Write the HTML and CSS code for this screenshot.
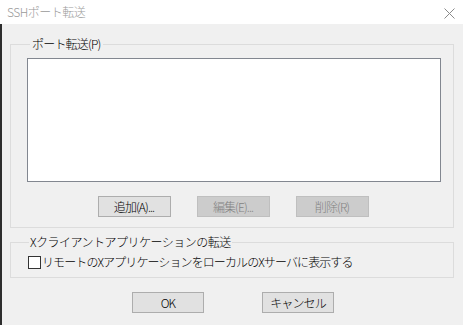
FILE: index.html
```html
<!DOCTYPE html>
<html>
<head>
    <title>SSHポート転送</title>
    <link rel="stylesheet" href="styles.css">
</head>
<body>
    <div class="titlebar">
        <span class="title">SSHポート転送</span>
        <svg class="close" width="11" height="11" viewBox="0 0 11 11">
            <path d="M0.5 0.5 L10.5 10.5 M10.5 0.5 L0.5 10.5" stroke="#8a8a8a" stroke-width="1" fill="none"/>
        </svg>
    </div>

    <div class="dialog">
        <fieldset class="group">
            <legend>ポート転送(P)</legend>
            <div class="listbox"></div>
            <div class="btn-row">
                <button class="btn">追加(A)...</button>
                <button class="btn" disabled>編集(E)...</button>
                <button class="btn" disabled>削除(R)</button>
            </div>
        </fieldset>

        <fieldset class="group group-x">
            <legend>Xクライアントアプリケーションの転送</legend>
            <label class="check">
                <span class="box"></span>
                <span>リモートのXアプリケーションをローカルのXサーバに表示する</span>
            </label>
        </fieldset>

        <div class="footer">
            <button class="btn btn-wide">OK</button>
            <button class="btn btn-wide">キャンセル</button>
        </div>
    </div>
</body>
</html>
```

FILE: styles.css
```css
html, body { margin: 0; height: 100%; }
body { width: 463px; height: 325px; background: #f0f0f0; font-family: "Noto Sans CJK JP", "Noto Sans", sans-serif; font-size: 12px; font-weight: 300; color: #000; display: flex; flex-direction: column; overflow: hidden; }

.titlebar { height: 24px; background: #fff; display: flex; align-items: center; justify-content: space-between; padding: 0 8px 0 7px; flex-shrink: 0; }
.title { color: #9a9a9a; font-size: 12px; line-height: 16px; letter-spacing: -0.5px; }
.close { margin-top: 2px; }

.dialog { flex: 1; border-left: 2px solid #2e2e2e; padding: 12px 9px 0 8px; display: flex; flex-direction: column; }

.group { margin: 0; border: 1px solid #dcdcdc; padding: 6px 12px 10px 16px; min-width: 0; }
.group legend { margin-left: 3px; padding: 0 2px; line-height: 16px; letter-spacing: -0.8px; }
.group-x { margin-top: 6px; padding: 4px 12px 7px 16px; }
.group-x legend { margin-left: 2px; padding: 0 1px; letter-spacing: -0.5px; }

.listbox { height: 122px; background: #fff; border: 1px solid #828790; }

.btn-row { display: flex; justify-content: center; gap: 26px; margin-top: 14px; padding-right: 2px; }
.btn { width: 73px; height: 21px; background: #e1e1e1; border: 1px solid #adadad; font-family: inherit; font-size: 12px; font-weight: 300; color: #000; padding: 0; line-height: 17px; letter-spacing: -0.9px; }
.btn:disabled { background: #cccccc; border-color: #bfbfbf; color: #838383; }

.check { display: flex; align-items: center; margin-left: 1px; line-height: 16px; letter-spacing: -0.9px; }
.box { width: 11px; height: 11px; border: 1px solid #333; background: #fff; margin-right: 1px; }

.footer { display: flex; justify-content: center; gap: 58px; margin-top: 14px; padding-left: 2px; }
.btn-wide { width: 72px; height: 21px; }
```
